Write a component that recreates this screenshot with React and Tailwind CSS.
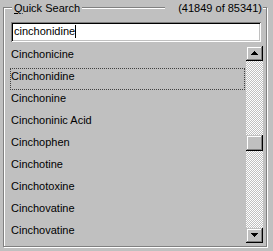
import React from 'react';

const items = [
  'Cinchonicine',
  'Cinchonidine',
  'Cinchonine',
  'Cinchoninic Acid',
  'Cinchophen',
  'Cinchotine',
  'Cinchotoxine',
  'Cinchovatine',
  'Cinchovatine',
];

const raised =
  'bg-[#c0c0c0] shadow-[inset_-1px_-1px_0_#000,inset_1px_1px_0_#c0c0c0,inset_-2px_-2px_0_#808080,inset_2px_2px_0_#fff]';

function Arrow({ up }) {
  return (
    <svg width="7" height="4" viewBox="0 0 7 4" shapeRendering="crispEdges" className="block">
      {up ? (
        <>
          <rect x="3" y="0" width="1" height="1" fill="#000" />
          <rect x="2" y="1" width="3" height="1" fill="#000" />
          <rect x="1" y="2" width="5" height="1" fill="#000" />
          <rect x="0" y="3" width="7" height="1" fill="#000" />
        </>
      ) : (
        <>
          <rect x="0" y="0" width="7" height="1" fill="#000" />
          <rect x="1" y="1" width="5" height="1" fill="#000" />
          <rect x="2" y="2" width="3" height="1" fill="#000" />
          <rect x="3" y="3" width="1" height="1" fill="#000" />
        </>
      )}
    </svg>
  );
}

export default function App() {
  const selected = 1;

  return (
    <div className="relative w-[273px] h-[251px] bg-[#c0c0c0] pt-[7px] pl-[3px] text-black text-[11px] leading-[13px] font-['Liberation_Sans',Arial,sans-serif] overflow-hidden">
      {/* group frame */}
      <div className="w-[264px] h-[240px] border border-[#808080] shadow-[inset_1px_1px_0_#fff,1px_1px_0_#fff]">
        <div className="ml-[7px] mt-[14px] w-[250px] h-[20px] bg-white pl-[3px] pt-[1px] flex items-start shadow-[inset_1px_1px_0_#808080,inset_-1px_-1px_0_#fff,inset_2px_2px_0_#000,inset_-2px_-2px_0_#c0c0c0]">
          <span className="mt-[2px]">cinchonidine</span>
          <span className="inline-block w-px h-[13px] bg-black mt-[2px]" />
        </div>

        <div className="flex mt-[4px] ml-[6px]">
          <div className="w-[235px] h-[197px] overflow-hidden">
            {items.map((name, i) => (
              <div
                key={i}
                className={`h-[22px] border pt-[1px] whitespace-nowrap ${
                  i === selected ? 'border-dotted border-[#404040]' : 'border-transparent'
                }`}
              >
                {name}
              </div>
            ))}
          </div>

          <div className="ml-[1px] w-[17px] h-[197px] flex flex-col">
            <div className={`h-[15px] pl-[5px] pt-[5px] ${raised}`}>
              <Arrow up />
            </div>
            <div className="flex-1 bg-[repeating-conic-gradient(#fff_0_25%,#c0c0c0_0_50%)] bg-[length:2px_2px]">
              <div className={`mt-[74px] h-[16px] ${raised}`} />
            </div>
            <div className={`h-[15px] pl-[5px] pt-[5px] ${raised}`}>
              <Arrow />
            </div>
          </div>
        </div>
      </div>

      {/* legends over the frame line */}
      <div className="absolute left-[12px] top-[2px] px-[2px] bg-[#c0c0c0]">
        <span className="underline underline-offset-[1px]">Q</span>uick Search
      </div>
      <div className="absolute left-[165px] top-[2px] w-[98px] pr-[1px] text-right bg-[#c0c0c0]">
        (41849 of 85341)
      </div>
    </div>
  );
}
